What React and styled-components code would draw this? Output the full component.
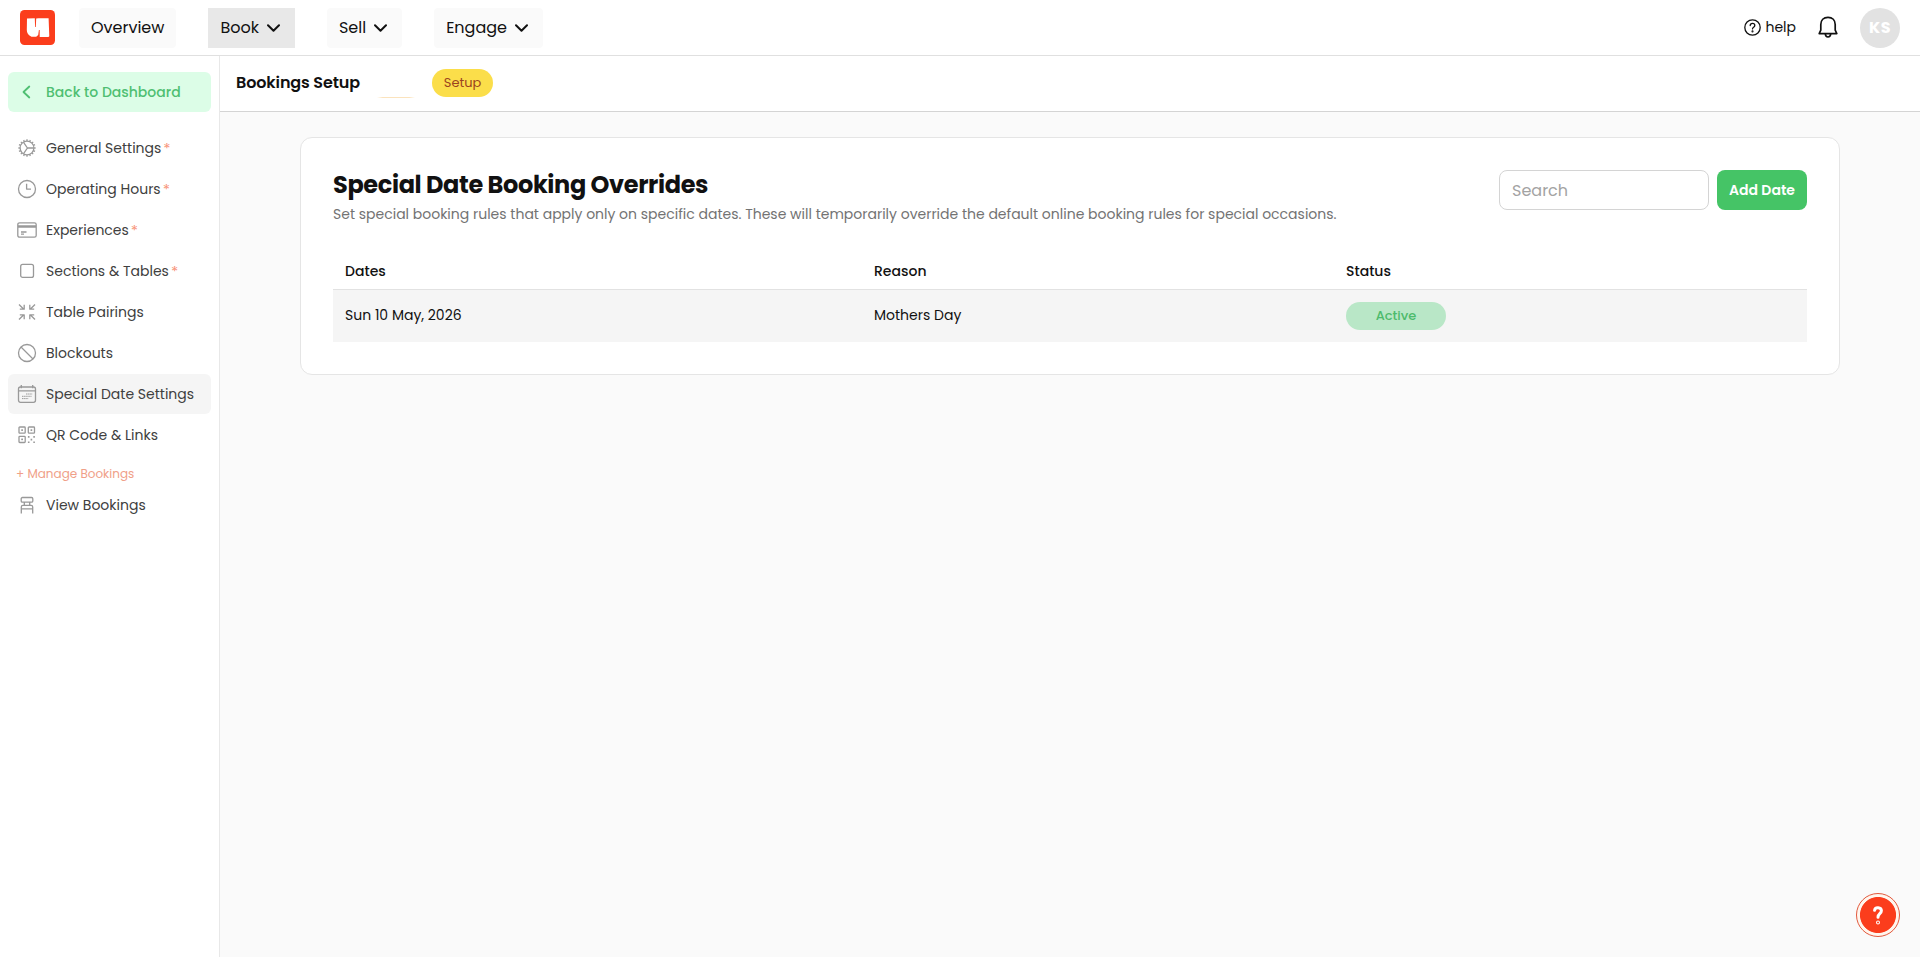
import styled, { createGlobalStyle } from "styled-components";

const GlobalStyle = createGlobalStyle`
  * {
    box-sizing: border-box;
  }

  body {
    margin: 0;
    background-color: #fafafa;
    color: #111;
    font-family: Poppins, Inter, "Noto Sans", sans-serif;
    font-size: 14px;
    overflow: hidden;
  }

  h1, h2, p {
    margin: 0;
  }

  button, input {
    font-family: inherit;
  }
`;

const navItems = [
    { label: "Overview" },
    { label: "Book", menu: true, active: true },
    { label: "Sell", menu: true },
    { label: "Engage", menu: true },
];

const sideItems = [
    { label: "General Settings", icon: "cog", required: true },
    { label: "Operating Hours", icon: "clock", required: true },
    { label: "Experiences", icon: "card", required: true },
    { label: "Sections & Tables", icon: "square", required: true },
    { label: "Table Pairings", icon: "arrows" },
    { label: "Blockouts", icon: "block" },
    { label: "Special Date Settings", icon: "calendar", active: true },
    { label: "QR Code & Links", icon: "qr" },
];

const overrides = [
    { date: "Sun 10 May, 2026", reason: "Mothers Day", status: "Active" },
];

const teeth = [...Array(16).keys()].map((i) => i * 22.5);

const sideIcons = {
    cog: (
        <>
            <circle cx="10" cy="10" r="6.9" />
            <path d="M10.4 10H16.8M10.4 10L6.6 4.3M10.4 10L6.6 15.7" />
            {teeth.map((deg) => (
                <path key={deg} d="M10 1.3V3.1" transform={`rotate(${deg} 10 10)`} />
            ))}
        </>
    ),
    clock: (
        <>
            <circle cx="10" cy="10" r="8.5" />
            <path d="M9.6 4.8V10.1H14" />
        </>
    ),
    card: (
        <>
            <rect x="0.8" y="2.8" width="18.4" height="14.4" rx="1.8" />
            <path d="M1 6H19M1 7.2H19M4 12H9.5M4 14.2H7" />
        </>
    ),
    square: <rect x="3.7" y="3.4" width="12.8" height="13" rx="2" />,
    arrows: (
        <path d="M2 2.5L6.8 7.2M2.8 7.2H7.2V2.8M18 2.5L13.2 7.2M17.2 7.2H12.8V2.8M2 17.5L6.8 12.8M2.8 12.8H7.2V17.2M18 17.5L13.2 12.8M17.2 12.8H12.8V17.2" />
    ),
    block: (
        <>
            <circle cx="10" cy="10" r="8.5" />
            <path d="M4 4L16 16" />
        </>
    ),
    calendar: (
        <>
            <rect x="1.5" y="3" width="17" height="15.3" rx="2" />
            <path d="M1.5 6.8H18.5M4.3 0.9V4.2M15.7 0.9V4.2" />
            <path d="M9 10H15.5M5 12.3H14.5M5 14.6H11.5" strokeWidth="1" strokeDasharray="1.5 0.6" />
        </>
    ),
    qr: (
        <>
            <rect x="2" y="2" width="6.2" height="6.2" rx="0.8" />
            <rect x="11.3" y="2" width="6.2" height="6.2" rx="0.8" />
            <rect x="2" y="11.3" width="6.2" height="6.2" rx="0.8" />
            <path d="M4.2 5.1H6M5.1 4.2V6M13.5 5.1H15.3M14.4 4.2V6M4.2 14.4H6M5.1 13.5V15.3" />
            <path d="M10.9 11.9H12.5M16.3 11.9H17.9M13.6 14.6H15.2M10.9 17.3H12.5M16.3 17.3H17.9" strokeWidth="1.6" />
        </>
    ),
    chair: (
        <>
            <rect x="4.2" y="2.5" width="11.6" height="4.6" rx="1.2" />
            <path d="M7.3 7.1V10.3M12.7 7.1V10.3" />
            <path d="M4.3 18.4V12Q4.3 10.4 5.9 10.4H14.1Q15.7 10.4 15.7 12V18.4M4.3 13.9H15.7" />
        </>
    ),
};

const SideIcon = ({ name }) => (
    <Glyph viewBox="0 0 20 20" width="20" height="20">
        {sideIcons[name]}
    </Glyph>
);

const Logo = () => (
    <svg width="35" height="35" viewBox="0 0 35 35">
        <rect width="35" height="35" rx="4.5" fill="#fb3d1c" />
        <path
            fill="#fff"
            d="M7 8.6L14.8 8.2L15.1 17H15.8L16.2 8.6L18.5 8.2H28.6L29.3 26.3L28.4 27H19.7V20H18.9L18.2 25L16.2 26.8H11.5Q6.8 24.8 6.8 20Z"
        />
    </svg>
);

const ChevronDown = () => (
    <svg width="13" height="8" viewBox="0 0 13 8" fill="none" stroke="#111" strokeWidth="2" strokeLinecap="round" strokeLinejoin="round">
        <path d="M1 1.2L6.5 6.7L12 1.2" />
    </svg>
);

const Bell = () => (
    <svg width="20" height="23" viewBox="0 0 20 23" fill="none" stroke="#111" strokeWidth="1.7" strokeLinejoin="round" strokeLinecap="round">
        <path d="M1.2 17.6L2.8 14.2V8.6C2.8 4.2 5.6 1.4 10 1.4S17.2 4.2 17.2 8.6V14.2L18.8 17.6Z" />
        <path d="M7.3 17.8Q7.5 21 10 21T12.7 17.8" />
    </svg>
);

const HelpIcon = () => (
    <svg width="17" height="17" viewBox="0 0 17 17" fill="none" stroke="#111" strokeWidth="1.3" strokeLinecap="round">
        <circle cx="8.5" cy="8.5" r="7.7" />
        <path d="M6.2 6.6C6.3 3.6 10.8 3.7 10.8 6.5C10.8 8.3 8.5 8.1 8.5 9.9" />
        <circle cx="8.5" cy="12.4" r="0.4" fill="#111" />
    </svg>
);

const TopBar = () => (
    <Header>
        <Logo />
        <Nav>
            {navItems.map((item) => (
                <NavButton key={item.label} $active={item.active} $menu={item.menu}>
                    {item.label}
                    {item.menu && <ChevronDown />}
                </NavButton>
            ))}
        </Nav>
        <Account>
            <HelpLink>
                <HelpIcon />
                <span>help</span>
            </HelpLink>
            <Bell />
            <Avatar>KS</Avatar>
        </Account>
    </Header>
);

const SideMenu = () => (
    <Sidebar>
        <BackButton>
            <svg width="9" height="14" viewBox="0 0 9 14" fill="none" stroke="#4fbf72" strokeWidth="1.8" strokeLinecap="round" strokeLinejoin="round">
                <path d="M7.3 1.5L1.5 7L7.3 12.5" />
            </svg>
            Back to Dashboard
        </BackButton>
        <Menu>
            {sideItems.map((item) => (
                <MenuItem key={item.label} $active={item.active}>
                    <SideIcon name={item.icon} />
                    {item.label}
                    {item.required && <Star>*</Star>}
                </MenuItem>
            ))}
        </Menu>
        <MenuHeading>+ Manage Bookings</MenuHeading>
        <MenuItem>
            <SideIcon name="chair" />
            View Bookings
        </MenuItem>
    </Sidebar>
);

const App = () => {
    return (<>
        <GlobalStyle />
        <Page>
            <TopBar />
            <Body>
                <SideMenu />
                <Main>
                    <SubHeader>
                        <PageName>Bookings Setup</PageName>
                        <Underline />
                        <SetupPill>Setup</SetupPill>
                    </SubHeader>
                    <Content>
                        <Card>
                            <CardHead>
                                <div>
                                    <Title>Special Date Booking Overrides</Title>
                                    <Description>
                                        Set special booking rules that apply only on specific dates. These will temporarily override the default online booking rules for special occasions.
                                    </Description>
                                </div>
                                <Actions>
                                    <SearchInput type="text" placeholder="Search" />
                                    <AddButton>Add Date</AddButton>
                                </Actions>
                            </CardHead>
                            <TableHead>
                                <span>Dates</span>
                                <span>Reason</span>
                                <span>Status</span>
                            </TableHead>
                            {overrides.map((row) => (
                                <TableRow key={row.date}>
                                    <Cell>{row.date}</Cell>
                                    <Cell>{row.reason}</Cell>
                                    <StatusPill>{row.status}</StatusPill>
                                </TableRow>
                            ))}
                        </Card>
                    </Content>
                </Main>
            </Body>
            <HelpBubble>
                <svg width="10" height="19" viewBox="0 0 10 19" fill="none" stroke="#fff" strokeWidth="3" strokeLinecap="round" strokeLinejoin="round">
                    <path d="M1.6 4.3C2 0.7 8.4 0.9 8.4 4.8C8.4 7.8 5 7.7 5 11.2" />
                    <circle cx="5" cy="16.5" r="0.5" />
                </svg>
            </HelpBubble>
        </Page>
    </>);
};

const Page = styled.div`
    display: flex;
    flex-direction: column;
    height: 100vh;
`;

const Header = styled.header`
    display: flex;
    align-items: center;
    height: 56px;
    padding: 0 20px;
    background-color: #fff;
    border-bottom: 1px solid #e0e0e0;
`;

const Nav = styled.nav`
    display: flex;
    gap: 32px;
    margin-left: 24px;
`;

const NavButton = styled.button`
    display: flex;
    align-items: center;
    gap: 8px;
    height: 40px;
    padding: 0 ${(props) => (props.$menu ? "15px" : "12px")} 1px 12px;
    border: none;
    border-radius: ${(props) => (props.$active ? "0" : "4px")};
    background-color: ${(props) => (props.$active ? "#e8e8e8" : "#fafafa")};
    color: #111;
    font-size: 16px;

    svg {
        margin-top: 1px;
    }
`;

const Account = styled.div`
    display: flex;
    align-items: center;
    margin-left: auto;

    > svg {
        margin: 0 22px 0 21px;
    }
`;

const HelpLink = styled.a`
    display: flex;
    align-items: center;
    gap: 4px;
    margin-right: 1px;
    line-height: 20px;

    span {
        margin-bottom: 2px;
    }
`;

const Avatar = styled.div`
    display: flex;
    align-items: center;
    justify-content: center;
    width: 40px;
    height: 40px;
    border-radius: 50%;
    background-color: #e2e2e2;
    color: #fff;
    font-size: 16px;
    font-weight: 700;
    letter-spacing: 0.6px;
`;

const Body = styled.div`
    display: flex;
    flex: 1;
`;

const Sidebar = styled.aside`
    width: 220px;
    padding: 16px 8px;
    background-color: #fff;
    border-right: 1px solid #e8e8e8;
`;

const BackButton = styled.button`
    display: flex;
    align-items: center;
    gap: 15px;
    width: 100%;
    height: 40px;
    padding: 0 14px;
    border: none;
    border-radius: 6px;
    background-color: #dcfde7;
    color: #4fbf72;
    font-size: 14px;
    font-weight: 500;
`;

const Menu = styled.div`
    display: flex;
    flex-direction: column;
    gap: 1px;
    margin-top: 16px;
`;

const MenuItem = styled.a`
    display: flex;
    align-items: center;
    height: 40px;
    padding: 0 9px;
    border-radius: 6px;
    background-color: ${(props) => (props.$active ? "#f5f5f5" : "transparent")};
    color: #404040;
    white-space: nowrap;
`;

const Glyph = styled.svg`
    flex: none;
    margin-right: 9px;
    fill: none;
    stroke: #999;
    stroke-width: 1.3;
    stroke-linejoin: round;
`;

const Star = styled.span`
    margin-left: 2px;
    color: #f8957b;
    font-size: 15px;
`;

const MenuHeading = styled.p`
    margin-top: 9px;
    padding-left: 8px;
    color: #f0a088;
    font-size: 12px;
    line-height: 20px;

    & + a {
        margin-top: 1px;
    }
`;

const Main = styled.main`
    flex: 1;
`;

const SubHeader = styled.div`
    display: flex;
    align-items: center;
    height: 56px;
    padding: 0 16px 2px;
    background-color: #fff;
    border-bottom: 1px solid #d4d4d4;
`;

const PageName = styled.h2`
    color: #111;
    font-size: 16px;
    font-weight: 600;
    letter-spacing: -0.12px;
`;

const Underline = styled.span`
    align-self: flex-end;
    width: 38px;
    height: 1px;
    margin: 0 17px 11px;
    background: linear-gradient(90deg, #fff, #fbe3bd 15%, #fbe3bd 85%, #fff);
`;

const SetupPill = styled.span`
    display: flex;
    align-items: center;
    justify-content: center;
    width: 61px;
    height: 28px;
    border-radius: 14px;
    background-color: #fbde4a;
    color: #9c4420;
    font-size: 13px;
`;

const Content = styled.section`
    padding: 25px 80px;
`;

const Card = styled.div`
    padding: 32px;
    background-color: #fff;
    border: 1px solid #e5e5e5;
    border-radius: 12px;
`;

const CardHead = styled.div`
    display: flex;
    align-items: flex-start;
    justify-content: space-between;
    margin-bottom: 29px;
`;

const Title = styled.h1`
    color: #111;
    font-size: 24px;
    font-weight: 700;
    line-height: 30px;
    letter-spacing: -0.015em;
`;

const Description = styled.p`
    margin-top: 4px;
    color: #737373;
    line-height: 20px;
`;

const Actions = styled.div`
    display: flex;
    gap: 8px;
`;

const SearchInput = styled.input`
    width: 210px;
    height: 40px;
    padding: 0 12px;
    border: 1px solid #d4d4d4;
    border-radius: 8px;
    background-color: #fff;
    font-size: 16px;

    &::placeholder {
        color: #a3a3a3;
    }
`;

const AddButton = styled.button`
    width: 90px;
    height: 40px;
    padding: 0;
    border: none;
    border-radius: 8px;
    background-color: #45c466;
    color: #fff;
    font-size: 14px;
    font-weight: 600;
`;

const TableHead = styled.div`
    display: grid;
    grid-template-columns: 529px 472px 1fr;
    align-items: center;
    height: 37px;
    padding: 0 12px;
    border-bottom: 1px solid #e2e2e2;
    font-weight: 500;
`;

const TableRow = styled.div`
    display: grid;
    grid-template-columns: 529px 472px 1fr;
    align-items: center;
    height: 52px;
    padding: 0 12px;
    background-color: #f5f5f5;
`;

const Cell = styled.span`
    padding-bottom: 2px;
`;

const StatusPill = styled.span`
    display: flex;
    align-items: center;
    justify-content: center;
    width: 100px;
    height: 28px;
    border-radius: 14px;
    background-color: #b9e7c7;
    color: #4dbb6c;
    font-size: 13px;
    font-weight: 500;
`;

/* floats over the page content */
const HelpBubble = styled.button`
    position: fixed;
    right: 20px;
    bottom: 20px;
    display: flex;
    align-items: center;
    justify-content: center;
    width: 44px;
    height: 44px;
    padding: 0;
    border: 1px solid #e2583c;
    border-radius: 50%;
    background: radial-gradient(circle, #fb3d1c 17.6px, #fff6ee 18.4px);
`;

export default App;
